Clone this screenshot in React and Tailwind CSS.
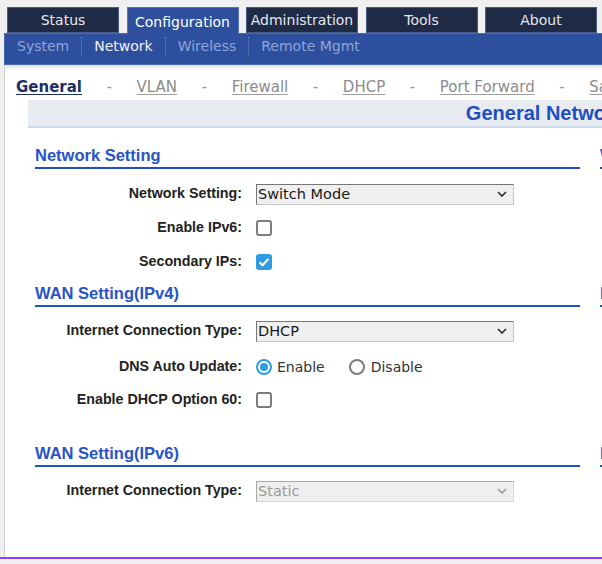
import { useState } from 'react';

// Router web UI — Configuration / Network / General page.

const TOP_TABS = ['Status', 'Configuration', 'Administration', 'Tools', 'About'];
const SUB_NAV = ['System', 'Network', 'Wireless', 'Remote Mgmt'];
const PAGE_TABS = ['General', 'VLAN', 'Firewall', 'DHCP', 'Port Forward', 'Save'];

const LABEL = "font-['Liberation_Sans',Arial,sans-serif]";

function Chevron({ muted }) {
  return (
    <svg width="10" height="6" viewBox="0 0 10 6" className="shrink-0" aria-hidden>
      <path d="M1 1l4 4 4-4" fill="none" stroke={muted ? '#9a9a9a' : '#2a2a2a'} strokeWidth="1.6" />
    </svg>
  );
}

function FakeSelect({ value, disabled }) {
  return (
    <div
      className={
        'flex items-center justify-between w-[258px] h-[21px] pl-px pr-[6px] border text-[14.5px] leading-none ' +
        (disabled
          ? 'bg-[#efefef] border-t-[#a9a9a9] border-l-[#a9a9a9] border-r-[#d8d8d8] border-b-[#d8d8d8] text-[#9b9b9b]'
          : 'bg-[#efefef] border-t-[#767676] border-l-[#767676] border-r-[#c6c6c6] border-b-[#c6c6c6] text-[#1a1a1a]')
      }
    >
      <span>{value}</span>
      <Chevron muted={disabled} />
    </div>
  );
}

function Checkbox({ checked }) {
  if (checked) {
    return (
      <span className="flex items-center justify-center w-4 h-4 rounded-[3px] bg-[#2f9be0]">
        <svg width="12" height="10" viewBox="0 0 12 10" aria-hidden>
          <path d="M1.5 5.2l3 3 6-6.5" fill="none" stroke="#fff" strokeWidth="2" />
        </svg>
      </span>
    );
  }
  return <span className="block w-4 h-4 rounded-[3px] border-2 border-[#7b7b80] bg-white" />;
}

function Radio({ checked }) {
  return checked ? (
    <span className="flex items-center justify-center w-4 h-4 rounded-full border-2 border-[#2f9be0] bg-white">
      <span className="block w-[8px] h-[8px] rounded-full bg-[#2f9be0]" />
    </span>
  ) : (
    <span className="block w-4 h-4 rounded-full border-2 border-[#7b7b80] bg-white" />
  );
}

function Heading({ children, className = '' }) {
  return (
    <div
      className={
        `${LABEL} text-[16.5px] leading-[20px] font-bold text-[#2953c9] pb-[2px] border-b-2 border-[#1f4fc4] ` +
        className
      }
    >
      {children}
    </div>
  );
}

function Row({ label, h = 'h-[34px]', children }) {
  return (
    <div className={`flex items-center ${h}`}>
      <div className={`${LABEL} w-[207px] text-right text-[14.25px] font-bold text-[#222]`}>{label}</div>
      <div className="ml-[14px] flex items-center">{children}</div>
    </div>
  );
}

function LeftColumn() {
  const [dns] = useState('enable');
  return (
    <div className="w-[545px]">
      <Heading className="mt-[17px]">Network Setting</Heading>
      <div className="mt-[8px]">
        <Row label="Network Setting:">
          <FakeSelect value="Switch Mode" />
        </Row>
        <Row label="Enable IPv6:">
          <Checkbox />
        </Row>
        <Row label="Secondary IPs:">
          <Checkbox checked />
        </Row>
      </div>

      <Heading className="mt-[4px]">WAN Setting(IPv4)</Heading>
      <div className="mt-[7px]">
        <Row label="Internet Connection Type:">
          <FakeSelect value="DHCP" />
        </Row>
        <Row label="DNS Auto Update:" h="h-[38px]">
          <label className="flex items-center gap-[5px] text-[14px] text-[#333]">
            <Radio checked={dns === 'enable'} />
            Enable
          </label>
          <label className="flex items-center gap-[6px] ml-[24px] text-[14px] text-[#333]">
            <Radio checked={dns === 'disable'} />
            Disable
          </label>
        </Row>
        <Row label="Enable DHCP Option 60:" h="h-[28px]">
          <Checkbox />
        </Row>
      </div>

      <Heading className="mt-[29px]">WAN Setting(IPv6)</Heading>
      <div className="mt-[7px]">
        <Row label="Internet Connection Type:">
          <FakeSelect value="Static" disabled />
        </Row>
      </div>
    </div>
  );
}

function RightColumn() {
  return (
    <div className="w-[545px]">
      <Heading className="mt-[17px]">Wireless Setting</Heading>
      <div className="h-[114px]" />
      <Heading>LAN Setting(IPv4)</Heading>
      <div className="h-[136px]" />
      <Heading>LAN Setting(IPv6)</Heading>
    </div>
  );
}

export default function App() {
  return (
    <div className="w-[602px] h-[564px] overflow-hidden bg-[#f0f0f0] font-['DejaVu_Sans',sans-serif]">
      {/* top tabs */}
      <div className="flex items-end gap-[7.5px] pl-[7px] pt-[7px] h-[33px]">
        {TOP_TABS.map((t) =>
          t === 'Configuration' ? (
            <div
              key={t}
              className="relative z-10 -mb-px flex items-center justify-center w-[112px] h-[27px] pt-[2px] bg-[#2d4f9e] border border-b-0 border-[#5374c0] text-[14px] text-white"
            >
              {t}
            </div>
          ) : (
            <div
              key={t}
              className="flex items-center justify-center w-[112px] h-[26px] bg-[#1f2a45] border border-[#465a87] text-[14px] text-[#e4e7ef]"
            >
              {t}
            </div>
          )
        )}
      </div>

      <div className="ml-[4px] w-[1200px]">
        {/* sub navigation */}
        <div className="flex items-center h-[32px] pb-[6px] bg-[#2d4f9e] border border-[#4868b4]">
          {SUB_NAV.map((s, i) => (
            <div
              key={s}
              className={
                'px-3 text-[14px] leading-[18px] ' +
                (i > 0 ? 'border-l border-dotted border-[#6e89c8] ' : '') +
                (s === 'Network' ? 'text-[#eef2fa]' : 'text-[#8ea5d9]')
              }
            >
              {s}
            </div>
          ))}
        </div>

        {/* content */}
        <div className="h-[492px] bg-white border-l border-[#d2d2d2] shadow-[inset_0_4px_4px_-2px_rgba(0,0,0,0.14)]">
          <div className="flex items-center gap-[24.6px] pl-[11px] pt-[12px] h-[31px] text-[15px] leading-[20px]">
            {PAGE_TABS.map((p, i) => (
              <div key={p} className="flex items-center gap-[24.6px]">
                {i > 0 && <span className="text-[#9a9a9a]">-</span>}
                {p === 'General' ? (
                  <span className="font-bold text-[#1d2f63] underline underline-offset-2">{p}</span>
                ) : (
                  <span className="text-[#8c8c8c] underline underline-offset-2 decoration-[#a0a0a0]">{p}</span>
                )}
              </div>
            ))}
          </div>

          <div className="ml-[23px] mt-[4px]">
            <div
              className={`${LABEL} w-[1108px] h-[28px] bg-[#e8ebf0] border-b-2 border-[#ccd8ec] text-center text-[20px] leading-[26px] font-bold text-[#1d4fc4]`}
            >
              General Network Setting
            </div>
            <div className="flex gap-[20px] pl-[7px]">
              <LeftColumn />
              <RightColumn />
            </div>
          </div>
        </div>
      </div>

      <div className="h-[2px] bg-[#8a3ffc]" />
    </div>
  );
}
